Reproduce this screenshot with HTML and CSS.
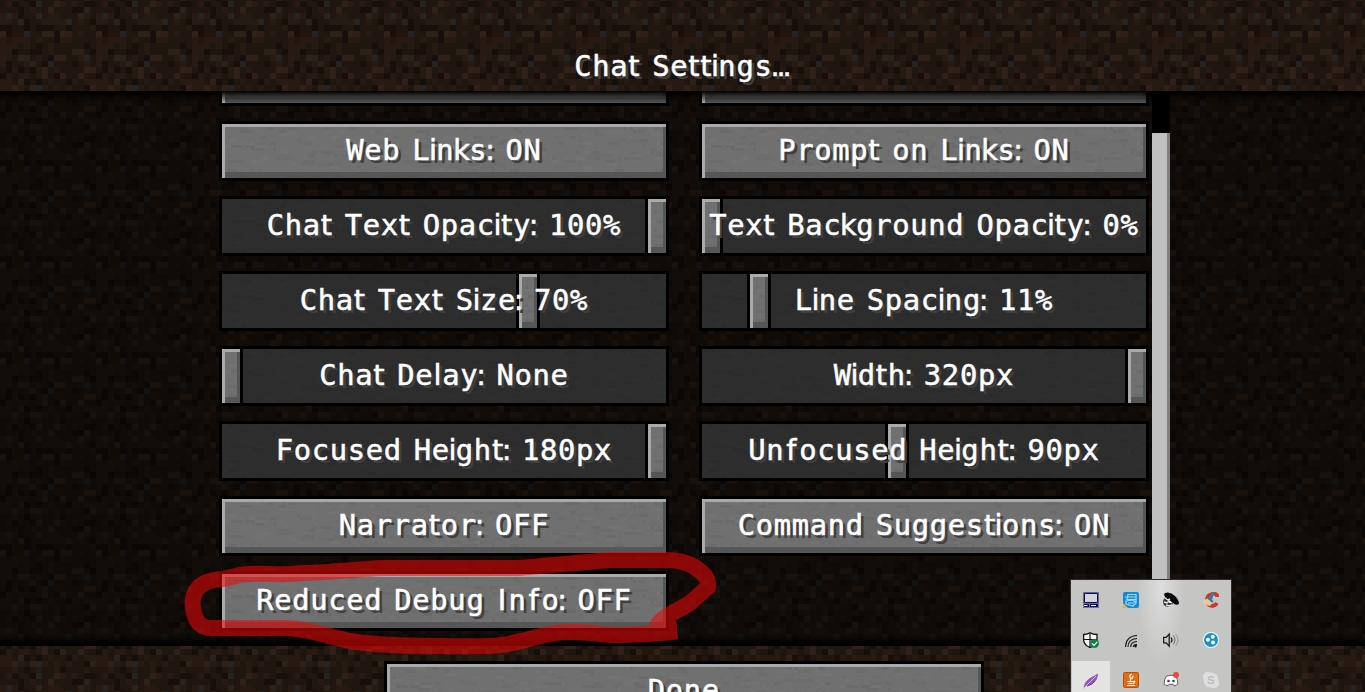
FILE: index.html
```html
<!DOCTYPE html>
<html lang="en">

<head>
    <meta charset="UTF-8">
    <meta name="viewport" content="width=device-width, initial-scale=1.0">
    <title>Chat Settings</title>
    <link rel="stylesheet" href="styles.css">
</head>

<body>

    <div class="screen">
        <header class="header">
            <h1 class="label">Chat Settings...</h1>
        </header>

        <main class="list">
            <div class="options">
                <div class="option button"></div>
                <div class="option button"></div>

                <div class="option button"><span class="label">Web Links: ON</span></div>
                <div class="option button"><span class="label">Prompt on Links: ON</span></div>

                <div class="option slider" data-value="426"><span class="label">Chat Text Opacity: 100%</span></div>
                <div class="option slider" data-value="0"><span class="label">Text Background Opacity: 0%</span></div>

                <div class="option slider" data-value="297"><span class="label">Chat Text Size: 70%</span></div>
                <div class="option slider" data-value="48"><span class="label">Line Spacing: 11%</span></div>

                <div class="option slider" data-value="0"><span class="label">Chat Delay: None</span></div>
                <div class="option slider" data-value="426"><span class="label">Width: 320px</span></div>

                <div class="option slider" data-value="426"><span class="label">Focused Height: 180px</span></div>
                <div class="option slider" data-value="186"><span class="label">Unfocused Height: 90px</span></div>

                <div class="option button"><span class="label">Narrator: OFF</span></div>
                <div class="option button"><span class="label">Command Suggestions: ON</span></div>

                <div class="option button"><span class="label">Reduced Debug Info: OFF</span></div>
            </div>
            <div class="scrollbar"><div class="thumb"></div></div>
        </main>

        <footer class="footer">
            <div class="option button done"><span class="label">Done</span></div>
        </footer>
    </div>

    <!-- red marker -->
    <svg class="marker" width="550" height="110" viewBox="175 548 550 110">
        <path d="M669 634L669 625L658 624C664 615 682 609 690 603Q700 594 708 587Q709 577 700 571Q688 560 665 560H608C580 563 550 565 518 568H384C355 569 325 573 302 573C280 576 265 573 249 574C238 574 231 578 222 579Q205 580 198 588Q191 596 193 608C195 622 201 628 212 628H288C315 630 325 636 350 641C375 645 410 646 440 646C465 646 495 648 517 642C535 638 550 632 568 632C590 631 600 635 618 635C640 634 660 634 677 631" />
    </svg>

    <div class="tray">
        <div class="cell">
            <svg viewBox="0 0 16 16"><path d="M.5 .5h15v11H.5z" fill="#d7d7d7" stroke="#686868"/><path d="M1.500 1.500h13v9h-13z" fill="#d6d6d6" stroke="#080880"/><path d="M0 11.500h16V16H0z" fill="#777"/><path d="M1 12h5v3H1zM7 12h8v3H7z" fill="#080880"/><path d="M1 13.500h3.500M8 13.500h5" stroke="#fff"/></svg>
        </div>
        <div class="cell">
            <svg viewBox="0 0 16 16"><rect width="16" height="16" rx="2" fill="#1688d4"/><path d="M0 11l5 5H2q-2 0-2-2z" fill="#e3bd3c"/><path d="M5 2.500h8v5H4zM3 9l7-1 3 3-3 3-7-2zM2 5h5M7 5h5M5 11h6M13 2v9" fill="none" stroke="#9bdcf7" stroke-width="1.2"/></svg>
        </div>
        <div class="cell">
            <svg viewBox="0 0 16 16"><circle cx="5" cy="10" r="5" fill="#353535"/><path d="M2 1Q7-1 12 4q4 4 4 8-3 2-6-1L3 6Q0 3 2 1z" fill="#080808"/><path d="M2 6l3 2 2-1M1 10l3 1 2-2 3 2M3 13l3 1 3-1" fill="none" stroke="#e8e8e8" stroke-width="1.4"/><circle cx="7" cy="10" r="1" fill="#fff"/></svg>
        </div>
        <div class="cell">
            <svg viewBox="0 0 16 16"><path d="M14 5V3Q12 1 9 2 4 3 4 8t5 6q3 0 5-3" fill="none" stroke="#cf372c" stroke-width="3.8"/><path d="M9 0l2 1-2 7-3-1z" fill="#2d80bd"/><path d="M5 6l5 4-3 4-6-2-1-3z" fill="#e9c991"/><path d="M5 6l5 4" stroke="#287bb5" stroke-width="2"/></svg>
        </div>
        <div class="cell">
            <svg viewBox="0 0 16 16"><path d="M7 .7Q10 2.500 14 2.500V8q-1 5-7 7.500Q1 13 .6 8V2.500Q4 2.500 7 .7z" fill="#f4f4f4" stroke="#111" stroke-width="1.3"/><path d="M7 1v14M1 7.500h13" stroke="#111" stroke-width="1.2"/><circle cx="11.500" cy="11.500" r="4.500" fill="#118246"/><path d="M9 11.400l2 2 3.300-3.600" fill="none" stroke="#fff" stroke-width="1.2"/></svg>
        </div>
        <div class="cell">
            <svg viewBox="0 0 16 16"><g fill="none" stroke="#181818" stroke-width="1.1"><path d="M2.500 15Q3 4 14 3.500M5 15q0-8 9-8.500M7.700 15q0-5 6.300-5.500M10.300 15q0-2.500 3.700-2.500"/></g><circle cx="12.500" cy="14" r="1.4" fill="#111"/></svg>
        </div>
        <div class="cell">
            <svg viewBox="0 0 16 16"><path d="M.7 5.300h2.500l3-3.200v12l-3-3.300H.7z" fill="none" stroke="#111" stroke-width="1.2"/><path d="M8 5.500q2 2.500 0 5" fill="none" stroke="#111" stroke-width="1.2"/><path d="M10.300 3.700q3.300 4.300 0 8.600" fill="none" stroke="#666"/><path d="M12.500 2q5 6 0 12" fill="none" stroke="#999"/></svg>
        </div>
        <div class="cell">
            <svg viewBox="0 0 16 16"><circle cx="8" cy="8" r="8" fill="#f5f9fb"/><circle cx="8" cy="8" r="7" fill="#1b91cb"/><circle cx="9.800" cy="4.700" r="2" fill="#fff"/><circle cx="4.900" cy="7.800" r="2" fill="#fff"/><circle cx="10" cy="10.600" r="2" fill="#fff"/></svg>
        </div>
        <div class="cell active">
            <svg viewBox="0 0 16 16"><path d="M.5 15.500Q1 9 7 5l8-4.500Q15 6 11 9.500 7 13 3 13z" fill="#9356bd"/><path d="M.5 15.500L13 3" stroke="#d9b9ea"/><path d="M4 13q5-1 8-5" fill="none" stroke="#663093"/></svg>
        </div>
        <div class="cell">
            <svg viewBox="0 0 16 16"><rect x=".5" y=".5" width="15" height="15" rx="1" fill="#e06d12" stroke="#b94e0b"/><path d="M8.500 2q-3 2.500-1 4 1 1-.5 2.500M10.500 4q-2 1.500-1 3M4.500 9.500h6q2-1 1 1l-1.500 1M5.500 11.500h4M4 13.500h8" fill="none" stroke="#fff" stroke-width="1.1"/></svg>
        </div>
        <div class="cell">
            <svg viewBox="0 0 16 16"><path d="M3.500 4q4.500-1.500 9 0 2.500 3.500 2.500 8-1.500 1.500-4 1.800l-1-1.500H6l-1 1.500q-2.500-.3-4-1.800 0-4.500 2.500-8z" fill="#fafafa" stroke="#555" stroke-width=".9"/><circle cx="5.500" cy="9" r="1.300" fill="#444"/><circle cx="10.500" cy="9" r="1.300" fill="#444"/><circle cx="13" cy="3" r="3" fill="#ee4545"/></svg>
        </div>
        <div class="cell skype">
            <svg viewBox="0 0 16 16"><path d="M5 0q2 0 3 .6 7 0 7.400 7.400Q16 10 16 11q0 5-5 5-2 0-3-.6Q1 15.400.6 8 0 7 0 5 0 0 5 0z" fill="#dedede"/></svg>
            <span class="skype-letter">S</span>
        </div>
    </div>

    <script src="script.js"></script>

</body>

</html>
```
FILE: styles.css
```css
* {
    box-sizing: border-box;
}

body {
    margin: 0;
    width: 1365px;
    height: 692px;
    overflow: hidden;
    position: relative;
    background-color: #000;
    font-family: "DejaVu Sans", sans-serif;
}

.screen {
    height: 692px;
    overflow: hidden;
}

.header {
    height: 91px;
    padding-top: 36px;
    background: var(--dirt) 0 -5px #20170f;
    text-align: center;
}

.label {
    display: block;
    margin: 0;
    font-size: 28.8px;
    font-weight: normal;
    line-height: 52px;
    color: #fff;
    text-shadow: 3px 3px 0 #3f3f3f;
    -webkit-text-stroke: 0.5px #fff;
    white-space: pre;
}

.header .label {
    line-height: 60px;
}

/* glyphs with fixed cells */
.label .mono {
    font-family: "DejaVu Sans Mono", monospace;
}

.list {
    position: relative;
    height: 555px;
    overflow: hidden;
    background: linear-gradient(rgba(0, 0, 0, 0.5), rgba(0, 0, 0, 0.5)), var(--dirt) 0 -57px #20170f;
}

/* shadows at both ends of the list */
.list::after {
    content: "";
    position: absolute;
    inset: 0;
    background:
        linear-gradient(#000, transparent) top / 100% 12px no-repeat,
        linear-gradient(transparent, #000) bottom / 100% 12px no-repeat;
}

.options {
    display: grid;
    grid-template-columns: 450px 450px;
    grid-auto-rows: 60px;
    gap: 15px 30px;
    margin: -45px 0 0 219px;
}

.option {
    position: relative;
    height: 60px;
    border: 3px solid #000;
    text-align: center;
}

.option .label {
    position: relative;
}

.button,
.handle {
    background: var(--stone) #707070;
    box-shadow: inset 3px 3px 0 #aaa, inset -3px -6px 0 #565656;
}

.slider {
    background: linear-gradient(rgba(0, 0, 0, 0.6), rgba(0, 0, 0, 0.6)), var(--stone) #707070;
}

.handle {
    position: absolute;
    top: 0;
    width: 24px;
    height: 54px;
    border: solid #000;
    border-width: 0 3px;
}

.scrollbar {
    position: absolute;
    left: 1152px;
    top: 0;
    width: 18px;
    height: 555px;
    padding-top: 42px;
    background-color: #000;
}

.thumb {
    height: 513px;
    background-color: #c0c0c0;
    border-right: 3px solid #808080;
}

.footer {
    height: 46px;
    padding-top: 15px;
    background: var(--dirt) 0 -75px #20170f;
}

.done {
    width: 600px;
    margin-left: 384px;
}

.marker {
    position: absolute;
    left: 175px;
    top: 548px;
}

.marker path {
    fill: none;
    stroke: rgba(240, 8, 8, 0.55);
    stroke-width: 16;
    stroke-linejoin: round;
}

.tray {
    position: absolute;
    left: 1071px;
    top: 580px;
    width: 160px;
    height: 120px;
    display: grid;
    grid-template-columns: repeat(4, 40px);
    grid-auto-rows: 40px;
    background:
        radial-gradient(ellipse 24px 80px at 90px 5px, rgba(225, 225, 225, 0.85), transparent),
        #c5c5c4;
    box-shadow: 0 0 0 1px #302e2c;
}

.cell {
    position: relative;
    display: flex;
    align-items: center;
    justify-content: center;
}

.cell svg {
    width: 16px;
    height: 16px;
}

.active {
    margin: 1px 1px 0;
    background-color: #e3e3e2;
}

.skype-letter {
    position: absolute;
    font: bold 11px "Liberation Sans", sans-serif;
    color: #bdbdbd;
}
```
FILE: script.js
```js
// dirt tile, one letter per texel
const dirt = [
    'bbcbabcbbcabbbcb',
    'bcabbasbbdcbcbaa',
    'bbbabcbbdbbbaadb',
    'cscabbdbccbbbdcb',
    'ccbdabbccccsbcba',
    'aabbabaaabbabbbc',
    'dabbsbbddaddbcbb',
    'cbcccbcbbaccbbbb',
    'cccbcbabcbbbbbab',
    'ccabbaabcbbbddba',
    'ccbddbcbaddbbcsb',
    'cabbcdbasbbbabcb',
    'bacabacdbcbbbbdd',
    'acbccbcdbadbbdbb',
    'ccbdababcbbacbcc',
    'ccdcbdscbcbcbbad'
];
const shades = { a: '#170f0b', b: '#1f160f', c: '#261a12', d: '#302118', s: '#222425' };

function svgUrl(w, h, rects) {
    const svg = `<svg xmlns="http://www.w3.org/2000/svg" width="${w}" height="${h}" shape-rendering="crispEdges">${rects}</svg>`;
    return `url("data:image/svg+xml,${encodeURIComponent(svg)}")`;
}

let rects = '';
dirt.forEach((row, y) => {
    [...row].forEach((c, x) => {
        rects += `<rect x="${x * 6}" y="${y * 6}" width="6" height="6" fill="${shades[c]}"/>`;
    });
});
document.documentElement.style.setProperty('--dirt', svgUrl(96, 96, rects));

// button stone, faint streaks
const stone = ['#737373', '#6d6d6d', '#707070', '#717171', '#6b6b6b'];
let seed = 7;
function rand(n) {
    seed = (seed * 16807) % 2147483647;
    return seed % n;
}
rects = '';
for (let i = 0; i < 620; i++) {
    rects += `<rect x="${rand(148) * 3}" y="${rand(18) * 3}" width="${3 + rand(4) * 3}" height="3" fill="${stone[rand(5)]}"/>`;
}
document.documentElement.style.setProperty('--stone', svgUrl(450, 54, rects));

// slider handles
document.querySelectorAll('.slider').forEach(slider => {
    const handle = document.createElement('div');
    handle.className = 'handle';
    handle.style.left = (slider.dataset.value - 3) + 'px';
    slider.prepend(handle);
});

// character advances in game pixels, 6 when not listed
const advances = { i: 2, '.': 2, ':': 2, l: 3, t: 4, I: 4, ' ': 4, f: 5, k: 5 };
const ctx = document.createElement('canvas').getContext('2d');

document.querySelectorAll('.label').forEach(label => {
    const text = label.textContent;
    label.textContent = '';
    [...text].forEach(c => {
        const span = document.createElement('span');
        const mono = !advances[c];
        if (mono) span.className = 'mono';
        ctx.font = `28.8px "DejaVu Sans${mono ? ' Mono' : ''}"`;
        span.textContent = c;
        // split the spare room over both sides of the glyph
        const spare = (advances[c] || 6) * 3 - ctx.measureText(c).width;
        span.style.marginLeft = (spare / 2 - 0.5) + 'px';
        span.style.letterSpacing = (spare / 2 + 0.5) + 'px';
        label.appendChild(span);
    });
});
```
